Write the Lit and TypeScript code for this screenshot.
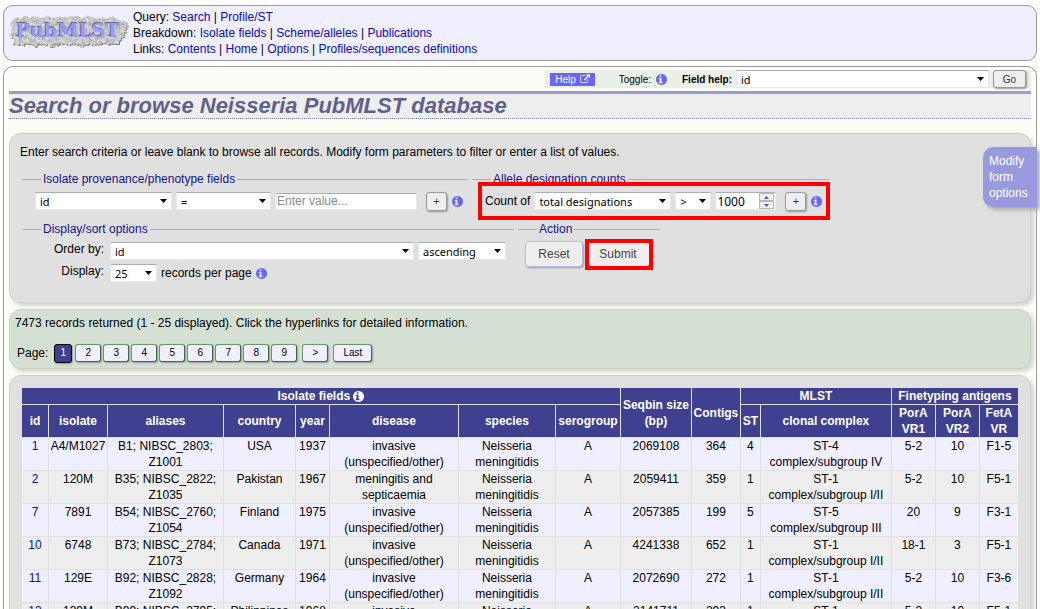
import { LitElement, html, css, svg, nothing } from "lit";
import { customElement, property } from "lit/decorators.js";

const INFO = "M1024 1376v-160q0-14-9-23t-23-9h-96v-512q0-14-9-23t-23-9h-320q-14 0-23 9t-9 23v160q0 14 9 23t23 9h96v320h-96q-14 0-23 9t-9 23v160q0 14 9 23t23 9h448q14 0 23-9t9-23zM896 480v-160q0-14-9-23t-23-9h-192q-14 0-23 9t-9 23v160q0 14 9 23t23 9h192q14 0 23-9t9-23zM1664 896q0 209-103 385.5t-279.5 279.5-385.5 103-385.5-103-279.5-279.5-103-385.5 103-385.5 279.5-279.5 385.5-103 385.5 103 279.5 279.5 103 385.5z";
const EXTERNAL = "M1408 928v320q0 119-84.5 203.5t-203.5 84.5h-832q-119 0-203.5-84.5t-84.5-203.5v-832q0-119 84.5-203.5t203.5-84.5h704q14 0 23 9t9 23v64q0 14-9 23t-23 9h-704q-66 0-113 47t-47 113v832q0 66 47 113t113 47h832q66 0 113-47t47-113v-320q0-14 9-23t23-9h64q14 0 23 9t9 23zm384-864v512q0 26-19 45t-45 19-45-19l-176-176-652 652q-10 10-23 10t-23-10l-114-114q-10-10-10-23t10-23l652-652-176-176q-19-19-19-45t19-45 45-19h512q26 0 45 19t19 45z";

const infoIcon = () => html`<svg class="info" viewBox="128 128 1536 1536" aria-hidden="true"><path d=${INFO}></path></svg>`;
const externalIcon = () => html`<svg class="ext" viewBox="0 0 1792 1664" aria-hidden="true"><path d=${EXTERNAL}></path></svg>`;

const select = (cls: string, label: string, value: string, id = "") => html`
  <span class="select ${cls}">
    <select id=${id || nothing} aria-label=${id ? nothing : label}><option>${value}</option></select>
    <svg viewBox="0 0 7 4" aria-hidden="true"><path d="M0 0h7L3.5 4z"></path></svg>
  </span>`;

const MENU: [string, string[]][] = [
  ["Query", ["Search", "Profile/ST"]],
  ["Breakdown", ["Isolate fields", "Scheme/alleles", "Publications"]],
  ["Links", ["Contents", "Home", "Options", "Profiles/sequences definitions"]],
];

const COLUMNS = [27, 59, 116, 72, 34, 129, 97, 65, 71, 49, 20, 131, 44, 44, 38];
const TOTAL = COLUMNS.reduce((a, b) => a + b, 0);

const NM = "Neisseria meningitidis";
const UNSPEC = "invasive (unspecified/other)";
const ROWS: string[][] = [
  ["1", "A4/M1027", "B1; NIBSC_2803; Z1001", "USA", "1937", UNSPEC, NM, "A", "2069108", "364", "4", "ST-4 complex/subgroup IV", "5-2", "10", "F1-5"],
  ["2", "120M", "B35; NIBSC_2822; Z1035", "Pakistan", "1967", "meningitis and septicaemia", NM, "A", "2059411", "359", "1", "ST-1 complex/subgroup I/II", "5-2", "10", "F5-1"],
  ["7", "7891", "B54; NIBSC_2760; Z1054", "Finland", "1975", UNSPEC, NM, "A", "2057385", "199", "5", "ST-5 complex/subgroup III", "20", "9", "F3-1"],
  ["10", "6748", "B73; NIBSC_2784; Z1073", "Canada", "1971", UNSPEC, NM, "A", "4241338", "652", "1", "ST-1 complex/subgroup I/II", "18-1", "3", "F5-1"],
  ["11", "129E", "B92; NIBSC_2828; Z1092", "Germany", "1964", UNSPEC, NM, "A", "2072690", "272", "1", "ST-1 complex/subgroup I/II", "5-2", "10", "F3-6"],
  ["13", "139M", "B99; NIBSC_2795; Z1099", "Philippines", "1968", UNSPEC, NM, "A", "2141711", "293", "1", "ST-1 complex/subgroup I/II", "5-2", "10", "F5-1"],
];

const base = css`
  * { box-sizing: border-box; }
  a { color: #0c0cb4; text-decoration: none; }
  .info { width: 11px; height: 11px; fill: #6666ff; flex: none; }
  .select { display: inline-grid; align-items: center; font: 11px "Noto Sans", "Open Sans", sans-serif; }
  .select > * { grid-area: 1 / 1; }
  .select svg { width: 7px; height: 4px; justify-self: end; margin-right: 5px; pointer-events: none; }
  .select select {
    appearance: none; width: 100%; height: 18px; margin: 0; padding: 0 14px 0 4px;
    border: 1px solid #e3e9ef; border-top-color: #abadb3; border-radius: 0;
    background: #fff; color: #000; font: inherit;
  }
  button { font-family: inherit; margin: 0; cursor: pointer; }
`;

@customElement("site-logo")
class SiteLogo extends LitElement {
  static styles = css`
    :host { display: block; }
    svg { display: block; width: 122px; height: 36px; }
    text { font: bold 19px "DejaVu Serif", serif; }
  `;
  render() {
    return html`<svg viewBox="0 0 122 36" role="img" aria-label="PubMLST">
      ${svg`
      <defs>
        <filter id="rock" x="-5%" y="-10%" width="110%" height="125%" color-interpolation-filters="sRGB">
          <feTurbulence type="fractalNoise" baseFrequency="0.3" numOctaves="3" seed="4" result="n"></feTurbulence>
          <feColorMatrix in="n" type="matrix" values="0.36 0 0 0 0.6  0.36 0 0 0 0.6  0.36 0 0 0 0.6  0 0 0 0 1" result="l"></feColorMatrix>
          <feDisplacementMap in="SourceGraphic" in2="n" scale="5" xChannelSelector="R" yChannelSelector="G" result="d"></feDisplacementMap>
          <feComposite in="l" in2="d" operator="in" result="t"></feComposite>
          <feDropShadow in="t" dx="1" dy="1" stdDeviation="0.4" flood-color="#666" flood-opacity="0.8"></feDropShadow>
        </filter>
      </defs>
      <path filter="url(#rock)" fill="#c4c4c4" d="M3 7L8 4L13 5L16 3L22 5L27 3L33 5L39 3L44 5L52 4L60 5L66 3L72 5L79 3L84 5L91 4L98 5L104 4L108 7L116 8L119 11L117 16L116 22L112 26L110 30L102 31L94 30L88 32L80 31L73 33L66 31L58 32L50 31L42 33L34 31L26 33L21 31L14 32L9 32L4 30L5 25L1 22L3 17L1 12Z"></path>
      <text x="6" y="23" fill="#66668c">PubMLST</text>
      <text x="7" y="24" fill="#9a9aff">PubMLST</text>`}
    </svg>`;
  }
}

@customElement("search-form")
class SearchForm extends LitElement {
  static styles = [base, css`
    :host { display: block; position: relative; border: 1px solid #ccc; border-radius: 12px; background: #e0e0e0; box-shadow: 3px 3px 4px #d4d4d0; padding: 10px 12px 16px; min-height: 170px; }
    p { margin: 0 0 11px -2px; line-height: 16px; }
    form { display: flex; flex-direction: column; gap: 8px; }
    .line { display: flex; gap: 4px; align-items: flex-start; }
    fieldset { position: relative; margin: 0; padding: 0; border: 0 solid #aaa; border-top-width: 1px; min-width: 0; }
    legend { margin-left: 19px; padding: 0 2px; color: #14148c; line-height: 16px; }
    .row { display: flex; align-items: center; gap: 4px; height: 28px; padding-left: 13px; }
    .fields { width: 446px; }
    .counts { width: 357px; }
    .display { width: 492px; }
    .action { width: 142px; }
    .line + .line { margin-top: -2px; }
    .sel-field, .sel-total { width: 137px; }
    .sel-op { width: 95px; }
    .sel-cmp { width: 36px; }
    .sel-order { width: 304px; }
    .sel-dir { width: 88px; }
    .sel-num { width: 47px; }
    .text { width: 142px; height: 17px; border: 1px solid #e3e9ef; border-top-color: #abadb3; padding: 0 1px; font: inherit; background: #fff; }
    .text::placeholder { color: #8a8a8a; opacity: 1; }
    .number { display: flex; width: 61px; height: 18px; background: #fff; border: 1px solid #e3e9ef; border-top-color: #abadb3; }
    .number input { appearance: textfield; width: 43px; border: 0; padding: 0 1px; background: none; font: 12px "Noto Sans", "Open Sans", sans-serif; }
    .number input::-webkit-inner-spin-button { display: none; }
    .steps { display: grid; grid-template-rows: 1fr 1fr; width: 15px; }
    .steps button { display: grid; place-items: center; padding: 0; border: 1px solid #b8b8b8; background: #f0f0f0; }
    .steps svg { width: 5px; height: 3px; fill: #4a5a9a; }
    .plus { width: 21px; height: 19px; margin: 0 1px 0 5px; padding: 0; border: 1px solid #999; border-radius: 3px; background: #eee; box-shadow: 1px 1px 2px #999; font-size: 11px; line-height: 16px; color: #333; }
    .sort { display: grid; grid-template-columns: 82px auto; column-gap: 6px; justify-content: start; padding-top: 3px; }
    .sort label { text-align: right; line-height: 18px; }
    .sort > div { display: flex; gap: 4px; align-items: center; height: 22px; }
    .buttons { display: flex; gap: 4px; padding: 4px 0 0 7px; }
    .buttons button { height: 26px; width: 58px; border: 1px solid #bbbbec; border-radius: 4px; background: #eee; box-shadow: 1px 1px 2px #999; color: #444; font-size: 12px; padding: 0; }
    .buttons .submit { width: 62px; border-color: #eee; }
    .mark { position: absolute; border: 4px solid #f00; pointer-events: none; }
    .mark-counts { left: 6px; right: -1px; top: -5px; height: 38px; }
    .mark-submit { left: 67px; top: 2px; width: 68px; height: 31px; }
    .modify { position: absolute; right: -7px; top: 13px; width: 54px; height: 60px; padding: 6px; border: 0; border-radius: 10px 0 0 10px; background: #9999dd; color: #fff; font-size: 12px; line-height: 16px; text-align: left; box-shadow: 3px 3px 4px #aaa; }
  `];
  render() {
    return html`
      <p>Enter search criteria or leave blank to browse all records. Modify form parameters to filter or enter a list of values.</p>
      <form @submit=${(e: Event) => e.preventDefault()}>
        <div class="line">
          <fieldset class="fields"><legend>Isolate provenance/phenotype fields</legend>
            <div class="row">
              ${select("sel-field", "Field", "id")}${select("sel-op", "Operator", "=")}
              <input class="text" type="text" placeholder="Enter value..." aria-label="Value">
              <button class="plus" type="button">+</button>${infoIcon()}
            </div>
          </fieldset>
          <fieldset class="counts"><legend>Allele designation counts</legend>
            <div class="row">
              <label for="total">Count of</label>${select("sel-total", "Count of", "total designations", "total")}${select("sel-cmp", "Comparison", ">")}
              <span class="number"><input type="number" value="1000" aria-label="Count">
                <span class="steps">
                  <button type="button" aria-label="Increase"><svg viewBox="0 0 5 3"><path d="M0 3L2.5 0L5 3z"></path></svg></button>
                  <button type="button" aria-label="Decrease"><svg viewBox="0 0 5 3"><path d="M0 0L2.5 3L5 0z"></path></svg></button>
                </span></span>
              <button class="plus" type="button">+</button>${infoIcon()}
            </div>
            <span class="mark mark-counts"></span>
          </fieldset>
        </div>
        <div class="line">
          <fieldset class="display"><legend>Display/sort options</legend>
            <div class="sort">
              <label for="order">Order by:</label>
              <div>${select("sel-order", "Order by", "id", "order")}${select("sel-dir", "Direction", "ascending")}</div>
              <label for="num">Display:</label>
              <div>${select("sel-num", "Display", "25", "num")}<span>records per page</span>${infoIcon()}</div>
            </div>
          </fieldset>
          <fieldset class="action"><legend>Action</legend>
            <div class="buttons"><button type="reset">Reset</button><button class="submit" type="submit">Submit</button></div>
            <span class="mark mark-submit"></span>
          </fieldset>
        </div>
      </form>
      <button class="modify" type="button">Modify form options</button>
    `;
  }
}

@customElement("result-pager")
class ResultPager extends LitElement {
  static styles = [base, css`
    :host { display: block; border: 1px solid #c8d0c8; border-radius: 12px; background: #d5e0d5; box-shadow: 3px 3px 4px #d4d4d0; padding: 5px; }
    p { margin: 0 0 12px; line-height: 16px; }
    nav { display: flex; align-items: center; gap: 2px; padding-left: 2px; height: 20px; }
    span { margin-right: 4px; }
    button { min-width: 26px; height: 18px; padding: 0; border: 1px solid #3c6a3c; border-color: #6a966a #3c6a3c #3c6a3c #6a966a; border-radius: 3px; background: #efefff; box-shadow: 1px 1px 2px #999; font-size: 10px; line-height: 14px; color: #000; }
    .current { min-width: 18px; height: 19px; background: #404090; border-color: #000; color: #fff; margin-right: 1px; }
    .next { margin-left: 3px; }
    .last { margin-left: 3px; width: 39px; }
  `];
  render() {
    return html`<p>7473 records returned (1 - 25 displayed). Click the hyperlinks for detailed information.</p>
      <nav><span>Page:</span><button class="current">1</button>
      ${[2, 3, 4, 5, 6, 7, 8, 9].map((n) => html`<button>${n}</button>`)}
      <button class="next">&gt;</button><button class="last">Last</button></nav>`;
  }
}

@customElement("result-table")
class ResultTable extends LitElement {
  @property({ attribute: false }) rows: string[][] = ROWS;
  static styles = [base, css`
    :host { display: block; border: 1px solid #ccc; border-radius: 12px; background: #e0e0e0; box-shadow: 3px 3px 4px #d4d4d0; padding: 12px; }
    table { width: 100%; table-layout: fixed; border-collapse: separate; border-spacing: 0; line-height: 16px; text-align: center; }
    th, td { padding: 0; border-right: 1px solid #e0e0e0; border-bottom: 1px solid #e0e0e0; }
    th { background: #404090; color: #fff; }
    th .info { fill: #fff; vertical-align: -2px; }
    tr > .end { border-right: 0; }
    td { vertical-align: top; background: #efefff; }
    td.complex { padding: 0 6px; }
    tbody tr:nth-child(even) td { background: #eee; }
  `];
  render() {
    const cls = (i: number) => (i === 14 ? "end" : i === 11 ? "complex" : "");
    return html`<table>
      <colgroup>${COLUMNS.map((w) => html`<col style="width:${(w / TOTAL) * 100}%">`)}</colgroup>
      <thead>
        <tr><th colspan="8">Isolate fields ${infoIcon()}</th><th rowspan="2">Seqbin size (bp)</th><th rowspan="2">Contigs</th><th colspan="2">MLST</th><th class="end" colspan="3">Finetyping antigens</th></tr>
        <tr>${["id", "isolate", "aliases", "country", "year", "disease", "species", "serogroup", "ST", "clonal complex", "PorA VR1", "PorA VR2", "FetA VR"].map((h, i) => html`<th class=${i === 12 ? "end" : ""}>${h}</th>`)}</tr>
      </thead>
      <tbody>${this.rows.map((r) => html`<tr>${r.map((c, i) => html`<td class=${cls(i)}>${i === 0 ? html`<a href="#">${c}</a>` : c}</td>`)}</tr>`)}</tbody>
    </table>`;
  }
}

@customElement("app-root")
class AppRoot extends LitElement {
  static styles = [base, css`
    :host { display: block; padding: 5px 3px 0; background: #fff; color: #000; font: 12px "Liberation Sans", Arial, sans-serif; }
    header { display: flex; gap: 2px; padding: 3px 5px; border: 1px solid #999; border-radius: 10px; background: #efefff; line-height: 16px; }
    site-logo { padding-top: 4px; }
    main { margin-top: 5px; padding: 3px 5px 12px; border: 1px solid #999; border-radius: 10px; background: #fdfdf8; }
    .tools { display: flex; align-items: center; width: fit-content; margin-left: auto; height: 18px; padding: 0 5px; background: #eceee8; font-size: 10px; }
    .help { display: flex; align-items: center; gap: 4px; height: 13px; padding: 0 5px; margin-right: 24px; background: #6666ff; color: #fff; }
    .ext { width: 10px; height: 10px; fill: #fff; }
    .toggle { display: flex; align-items: center; gap: 5px; margin-right: 15px; color: #000; }
    .tools label { font-weight: bold; margin-right: 4px; }
    .sel-help { width: 253px; margin-right: 4px; }
    .go { width: 33px; height: 18px; padding: 0; border: 1px solid #999; border-radius: 3px; background: #eee; box-shadow: 1px 1px 2px #999; font-size: 10px; line-height: 15px; color: #333; }
    h1 { margin: 3px 0 14px; height: 28px; border-top: 3px solid #9c9ccc; border-bottom: 1px dotted #7c7cb0; background: #eee; color: #606088; font: italic bold 22px/24px "Liberation Sans", Arial, sans-serif; }
    .stack { display: flex; flex-direction: column; gap: 6px; }
  `];
  render() {
    return html`
      <header><site-logo></site-logo>
        <nav>${MENU.map(([name, items]) => html`<div>${name}: ${items.map((t, i) => html`${i ? " | " : ""}<a href="#">${t}</a>`)}</div>`)}</nav>
      </header>
      <main>
        <div class="tools">
          <a class="help" href="#">Help ${externalIcon()}</a>
          <a class="toggle" href="#">Toggle: ${infoIcon()}</a>
          <label for="field-help">Field help:</label>
          ${select("sel-help", "Field help", "id", "field-help")}
          <button class="go">Go</button>
        </div>
        <h1>Search or browse Neisseria PubMLST database</h1>
        <div class="stack"><search-form></search-form><result-pager></result-pager><result-table></result-table></div>
      </main>`;
  }
}
